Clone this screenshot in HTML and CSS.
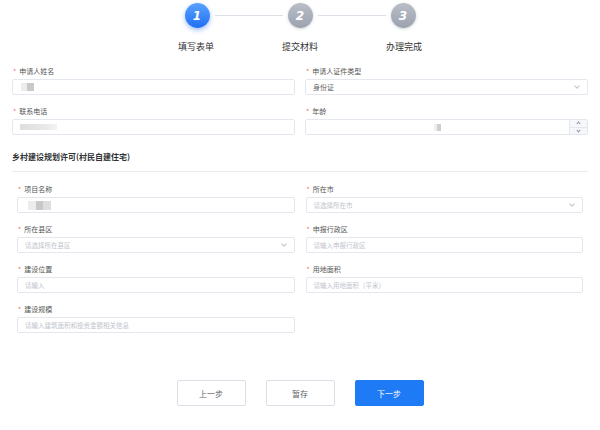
FILE: index.html
```html
<!DOCTYPE html>
<html>
<head>
  <meta charset="utf-8">
  <link rel="stylesheet" href="styles.css">
  <title>乡村建设规划许可</title>
</head>
<body>
  <div class="steps">
    <div class="track">
      <span class="dot active">1</span>
      <span class="line"></span>
      <span class="dot">2</span>
      <span class="line"></span>
      <span class="dot">3</span>
    </div>
    <div class="step-names">
      <span>填写表单</span>
      <span>提交材料</span>
      <span>办理完成</span>
    </div>
  </div>

  <div class="form">
    <div class="grid">
      <div class="field">
        <label><i>*</i>申请人姓名</label>
        <div class="input"><span class="mask mask-name"></span></div>
      </div>
      <div class="field">
        <label><i>*</i>申请人证件类型</label>
        <div class="input select"><span class="value">身份证</span><span class="chev"></span></div>
      </div>
      <div class="field">
        <label><i>*</i>联系电话</label>
        <div class="input"><span class="mask mask-phone"></span></div>
      </div>
      <div class="field">
        <label><i>*</i>年龄</label>
        <div class="input number">
          <div class="num-val"><span class="mask mask-age"></span></div>
          <div class="spin">
            <span class="up"></span>
            <span class="down"></span>
          </div>
        </div>
      </div>
    </div>

    <h3 class="section-title">乡村建设规划许可(村民自建住宅)</h3>
    <hr class="divider">

    <div class="grid inner">
      <div class="field">
        <label><i>*</i>项目名称</label>
        <div class="input"><span class="mask mask-project"></span></div>
      </div>
      <div class="field">
        <label><i>*</i>所在市</label>
        <div class="input select"><span class="ph">请选择所在市</span><span class="chev"></span></div>
      </div>
      <div class="field">
        <label><i>*</i>所在县区</label>
        <div class="input select"><span class="ph">请选择所在县区</span><span class="chev"></span></div>
      </div>
      <div class="field">
        <label><i>*</i>申报行政区</label>
        <div class="input"><span class="ph">请输入申报行政区</span></div>
      </div>
      <div class="field">
        <label><i>*</i>建设位置</label>
        <div class="input"><span class="ph">请输入</span></div>
      </div>
      <div class="field">
        <label><i>*</i>用地面积</label>
        <div class="input"><span class="ph">请输入用地面积（平米）</span></div>
      </div>
      <div class="field">
        <label><i>*</i>建设规模</label>
        <div class="input"><span class="ph">请输入建筑面积和投资金额相关信息</span></div>
      </div>
    </div>
  </div>

  <div class="actions">
    <button class="btn">上一步</button>
    <button class="btn">暂存</button>
    <button class="btn primary">下一步</button>
  </div>
</body>
</html>
```

FILE: styles.css
```css
body {
  margin: 0;
  font-family: "Noto Sans CJK SC", "Noto Sans", sans-serif;
  color: #606266;
  background: #fff;
}

/* steps */
.steps {
  padding-top: 3px;
}
.track {
  display: flex;
  justify-content: center;
  align-items: center;
}
.dot {
  width: 25px;
  height: 25px;
  border-radius: 50%;
  display: flex;
  justify-content: center;
  align-items: center;
  color: #fff;
  font-family: "DejaVu Sans", sans-serif;
  font-style: italic;
  font-weight: bold;
  font-size: 12px;
  background: linear-gradient(180deg, #b9bec8, #9ba2ae);
  box-shadow: 0 1px 3px rgba(120, 128, 140, 0.35);
}
.dot.active {
  background: linear-gradient(180deg, #5aa2ff, #1f6ff3);
  box-shadow: 0 2px 5px rgba(40, 110, 240, 0.45);
}
.line {
  width: 68px;
  height: 1px;
  margin: 0 5px;
  background: #dcdfe6;
}
.step-names {
  display: flex;
  justify-content: center;
  margin-top: 13px;
}
.step-names span {
  width: 104px;
  text-align: center;
  font-size: 9px;
  line-height: 12px;
  color: #333;
}

/* form */
.form {
  padding: 0 12px;
  margin-top: 13px;
}
.grid {
  display: grid;
  grid-template-columns: 1fr 1fr;
  column-gap: 10px;
  row-gap: 11px;
}
.grid.inner {
  padding: 0 5px;
  column-gap: 11px;
  margin-top: 12px;
}
.field label {
  display: block;
  font-size: 7px;
  line-height: 10px;
  height: 10px;
  margin: 0 0 3px 1px;
  color: #555;
}
.field label i {
  font-style: normal;
  color: #f56c6c;
  margin-right: 3px;
}
.input {
  height: 16px;
  box-sizing: border-box;
  border: 1px solid #e4e7ed;
  border-radius: 2px;
  display: flex;
  align-items: center;
  padding: 0 7px;
  font-size: 6.5px;
}
.input .ph {
  color: #c0c4cc;
}
.input .value {
  color: #606266;
  font-size: 7px;
}
.select {
  justify-content: space-between;
}
.chev {
  width: 3px;
  height: 3px;
  border-right: 1px solid #c0c4cc;
  border-bottom: 1px solid #c0c4cc;
  transform: rotate(45deg);
  margin: -2px 1px 0 0;
}

.number {
  padding: 0;
}
.num-val {
  flex: 1;
  display: flex;
  justify-content: center;
  align-items: center;
}
.spin {
  width: 17px;
  height: 100%;
  border-left: 1px solid #e4e7ed;
  background: #f5f7fa;
  display: flex;
  flex-direction: column;
}
.spin span {
  flex: 1;
  display: flex;
  justify-content: center;
  align-items: center;
}
.spin .up {
  border-bottom: 1px solid #e4e7ed;
}
.spin span::before {
  content: "";
  width: 2px;
  height: 2px;
  border-left: 1px solid #909399;
  border-top: 1px solid #909399;
}
.spin .up::before {
  transform: rotate(45deg);
  margin-top: 1px;
}
.spin .down::before {
  transform: rotate(225deg);
  margin-top: -1px;
}

/* blurred personal data */
.mask {
  display: inline-block;
  filter: blur(0.6px);
}
.mask-name {
  width: 13px;
  height: 8px;
  margin-left: 1px;
  background: linear-gradient(90deg, #ececec 0 50%, #c9c9c9 50%);
}
.mask-phone {
  width: 37px;
  height: 6px;
  background: linear-gradient(90deg, #dedede, #e9e9e9 70%, #f3f3f3);
}
.mask-age {
  width: 7px;
  height: 7px;
  background: linear-gradient(90deg, #eeeeee 0 40%, #cfcfcf 40%);
}
.mask-project {
  width: 23px;
  height: 9px;
  margin-left: 3px;
  background: linear-gradient(90deg, #ececec 0 35%, #c8c8c8 35% 65%, #dedede 65%);
}

.section-title {
  margin: 16px 0 0;
  font-size: 8px;
  line-height: 12px;
  font-weight: bold;
  color: #303133;
}
.divider {
  border: 0;
  height: 1px;
  background: #e8eaee;
  margin: 8px 0 0;
}

/* buttons */
.actions {
  display: flex;
  justify-content: center;
  gap: 20px;
  margin-top: 47px;
}
.btn {
  width: 69px;
  height: 26px;
  border: 1px solid #dcdfe6;
  border-radius: 2px;
  background: #fff;
  color: #606266;
  font-family: inherit;
  font-size: 8px;
  cursor: pointer;
}
.btn.primary {
  background: #1f7af5;
  border-color: #1f7af5;
  color: #fff;
}
```
